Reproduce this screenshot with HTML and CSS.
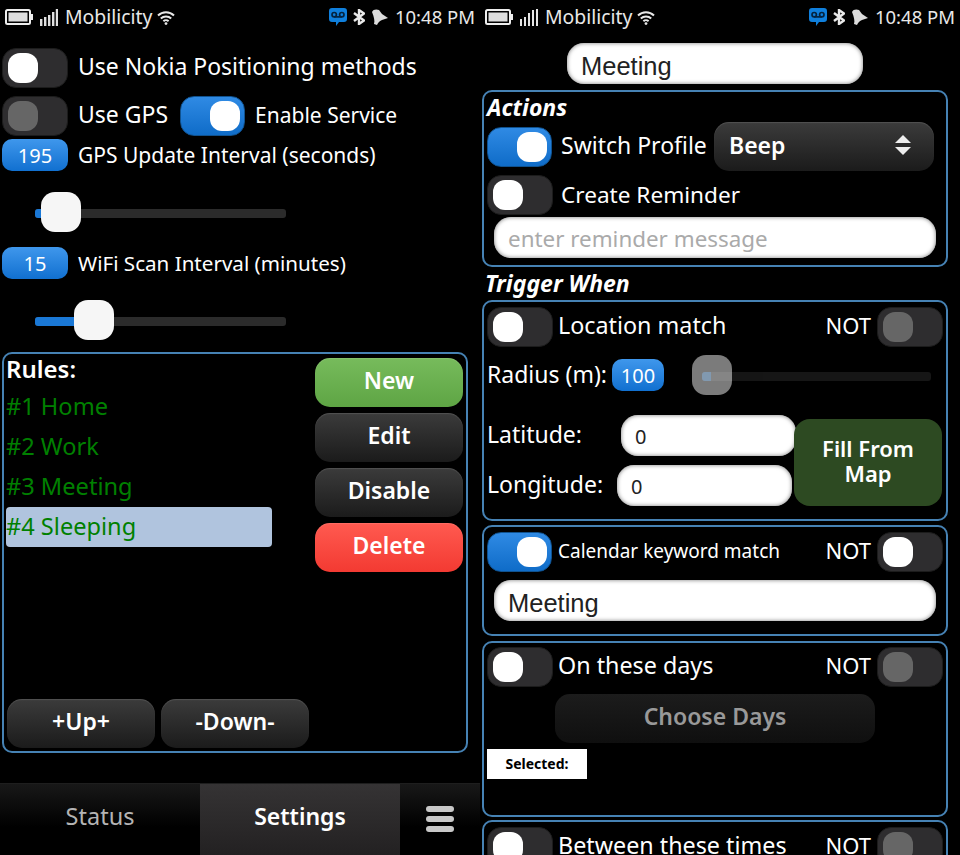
FILE: index.html
```html
<!DOCTYPE html>
<html lang="en">
<head>
    <meta charset="UTF-8">
    <title>Mobility rules</title>
    <link rel="stylesheet" href="styles.css">
</head>
<body>
    <div class="page">
        <!-- Settings screen -->
        <section class="screen">
            <div class="statusbar">
                <svg class="ico-battery" viewBox="0 0 28 16"><rect x="1" y="1" width="24" height="14" rx="1.5" fill="none" stroke="#eee" stroke-width="2"/><rect x="3.5" y="3.5" width="19" height="9" fill="#ddd"/><rect x="26" y="5" width="2" height="6" fill="#eee"/></svg>
                <svg class="ico-signal" viewBox="0 0 18 17"><g fill="#e0e0e0"><rect x="0" y="10" width="2.4" height="7"/><rect x="4" y="8" width="2.4" height="9"/><rect x="8" y="6" width="2.4" height="11"/><rect x="12" y="3" width="2.4" height="14"/><rect x="15.8" y="0" width="2.2" height="17"/></g></svg>
                <span class="carrier">Mobilicity</span>
                <svg class="ico-wifi" viewBox="0 0 18 15"><g fill="none" stroke="#e8e8e8" stroke-width="2"><path d="M1 5.500a11.500 11.500 0 0 1 16 0"/><path d="M3.800 8.500a7.500 7.500 0 0 1 10.400 0"/><path d="M6.400 11.300a3.700 3.700 0 0 1 5.200 0"/></g><circle cx="9" cy="13.600" r="1.400" fill="#e8e8e8"/></svg>
                <span class="status-right">
                    <svg class="ico-voicemail" viewBox="0 0 18 18"><path d="M3 0h12a3 3 0 0 1 3 3v8a3 3 0 0 1-3 3h-5l-3 4v-4H3a3 3 0 0 1-3-3V3a3 3 0 0 1 3-3z" fill="#0f7fdc"/><g fill="none" stroke="#04233f" stroke-width="1.700"><circle cx="5.200" cy="6.700" r="2.200"/><circle cx="12.800" cy="6.700" r="2.200"/><path d="M5.200 8.900h7.600"/></g></svg>
                    <svg class="ico-bt" viewBox="0 0 12 16"><path d="M1 4l10 7.500L6 15V1l5 3.500L1 12" fill="none" stroke="#e8e8e8" stroke-width="2.400"/></svg>
                    <svg class="ico-bell" viewBox="0 0 17 16"><path d="M1 3C2 0 6 0 8 1L11 5L17 9L11 11C8 12 7 14 6 16L3 15C4 12 3 8 1 3z" fill="#dcdcdc"/></svg>
                    <span class="clock">10:48 PM</span>
                </span>
            </div>

            <div class="settings">
                <div class="row">
                    <div class="toggle"><span class="knob"></span></div>
                    <span class="label">Use Nokia Positioning methods</span>
                </div>
                <div class="row row-gps">
                    <div class="toggle off-dim"><span class="knob"></span></div>
                    <span class="label">Use GPS</span>
                    <div class="toggle on"><span class="knob"></span></div>
                    <span class="label label-small">Enable Service</span>
                </div>
                <div class="row row-badge">
                    <span class="badge">195</span>
                    <span class="label label-mid">GPS Update Interval (seconds)</span>
                </div>
                <div class="slider">
                    <span class="track"><span class="fill" style="width: 8px"></span></span>
                    <span class="thumb" style="left: 6px"></span>
                </div>
                <div class="row row-badge row-badge-2">
                    <span class="badge">15</span>
                    <span class="label label-mid label-wifi">WiFi Scan Interval (minutes)</span>
                </div>
                <div class="slider slider-2">
                    <span class="track"><span class="fill" style="width: 42px"></span></span>
                    <span class="thumb" style="left: 39px"></span>
                </div>
            </div>

            <div class="box rules">
                <div class="rules-top">
                    <div class="rules-list">
                        <div class="rules-title">Rules:</div>
                        <div class="rule">#1 Home</div>
                        <div class="rule">#2 Work</div>
                        <div class="rule">#3 Meeting</div>
                        <div class="rule selected">#4 Sleeping</div>
                    </div>
                    <div class="rules-actions">
                        <button class="btn btn-green">New</button>
                        <button class="btn">Edit</button>
                        <button class="btn">Disable</button>
                        <button class="btn btn-red">Delete</button>
                    </div>
                </div>
                <div class="rules-move">
                    <button class="btn">+Up+</button>
                    <button class="btn">-Down-</button>
                </div>
            </div>

            <nav class="tabs">
                <div class="tab">Status</div>
                <div class="tab active">Settings</div>
                <div class="tab-menu"><span></span><span></span><span></span></div>
            </nav>
        </section>

        <!-- Rule editor screen -->
        <section class="screen">
            <div class="statusbar">
                <svg class="ico-battery" viewBox="0 0 28 16"><rect x="1" y="1" width="24" height="14" rx="1.5" fill="none" stroke="#eee" stroke-width="2"/><rect x="3.5" y="3.5" width="19" height="9" fill="#ddd"/><rect x="26" y="5" width="2" height="6" fill="#eee"/></svg>
                <svg class="ico-signal" viewBox="0 0 18 17"><g fill="#e4e4e4"><rect x="0" y="10" width="2" height="7"/><rect x="4" y="8" width="2" height="9"/><rect x="8" y="4" width="2" height="13"/><rect x="12" y="1" width="2" height="16"/><rect x="16" y="0" width="2" height="17"/></g></svg>
                <span class="carrier">Mobilicity</span>
                <svg class="ico-wifi" viewBox="0 0 18 15"><g fill="none" stroke="#e8e8e8" stroke-width="2"><path d="M1 5.500a11.500 11.500 0 0 1 16 0"/><path d="M3.800 8.500a7.500 7.500 0 0 1 10.400 0"/><path d="M6.400 11.300a3.700 3.700 0 0 1 5.200 0"/></g><circle cx="9" cy="13.600" r="1.400" fill="#e8e8e8"/></svg>
                <span class="status-right">
                    <svg class="ico-voicemail" viewBox="0 0 18 18"><path d="M3 0h12a3 3 0 0 1 3 3v8a3 3 0 0 1-3 3h-5l-3 4v-4H3a3 3 0 0 1-3-3V3a3 3 0 0 1 3-3z" fill="#0f7fdc"/><g fill="none" stroke="#04233f" stroke-width="1.700"><circle cx="5.200" cy="6.700" r="2.200"/><circle cx="12.800" cy="6.700" r="2.200"/><path d="M5.200 8.900h7.600"/></g></svg>
                    <svg class="ico-bt" viewBox="0 0 12 16"><path d="M1 4l10 7.500L6 15V1l5 3.500L1 12" fill="none" stroke="#e8e8e8" stroke-width="2.400"/></svg>
                    <svg class="ico-bell" viewBox="0 0 17 16"><path d="M1 3C2 0 6 0 8 1L11 5L17 9L11 11C8 12 7 14 6 16L3 15C4 12 3 8 1 3z" fill="#dcdcdc"/></svg>
                    <span class="clock">10:48 PM</span>
                </span>
            </div>

            <input class="field field-name" value="Meeting">

            <div class="box box-actions">
                <div class="heading heading-in">Actions</div>
                <div class="row row-profile">
                    <div class="toggle on"><span class="knob"></span></div>
                    <span class="label label-switch">Switch Profile</span>
                    <div class="select">
                        <span>Beep</span>
                        <svg class="select-arrows" viewBox="0 0 16 20"><path d="M8 0l8 8H0zM8 20l8-8H0z" fill="#eee"/></svg>
                    </div>
                </div>
                <div class="row row-reminder">
                    <div class="toggle"><span class="knob"></span></div>
                    <span class="label label-reminder">Create Reminder</span>
                </div>
                <input class="field field-wide field-pure" placeholder="enter reminder message">
            </div>

            <div class="heading heading-out">Trigger When</div>

            <div class="box box-location">
                <div class="row row-head">
                    <div class="toggle"><span class="knob"></span></div>
                    <span class="label label-head">Location match</span>
                    <span class="not">NOT</span>
                    <div class="toggle off-dim"><span class="knob"></span></div>
                </div>
                <div class="row row-radius">
                    <span class="label label-radius">Radius (m):</span>
                    <span class="badge badge-small">100</span>
                    <div class="slider slider-off">
                        <span class="track"><span class="fill" style="width: 9px"></span></span>
                        <span class="thumb" style="left: 0"></span>
                    </div>
                </div>
                <div class="coords">
                    <div class="coords-fields">
                        <div class="coord">
                            <span class="label label-radius">Latitude:</span>
                            <input class="field field-coord" value="0">
                        </div>
                        <div class="coord coord-long">
                            <span class="label label-radius">Longitude:</span>
                            <input class="field field-coord" value="0">
                        </div>
                    </div>
                    <button class="btn btn-map">Fill From Map</button>
                </div>
            </div>

            <div class="box box-calendar">
                <div class="row row-head">
                    <div class="toggle on"><span class="knob"></span></div>
                    <span class="label label-cal">Calendar keyword match</span>
                    <span class="not">NOT</span>
                    <div class="toggle"><span class="knob"></span></div>
                </div>
                <input class="field field-wide" value="Meeting">
            </div>

            <div class="box box-days">
                <div class="row row-head">
                    <div class="toggle"><span class="knob"></span></div>
                    <span class="label label-head">On these days</span>
                    <span class="not">NOT</span>
                    <div class="toggle off-dim"><span class="knob"></span></div>
                </div>
                <button class="btn btn-choose">Choose Days</button>
                <div class="selected-days">Selected:</div>
            </div>

            <div class="box box-times">
                <div class="row row-head">
                    <div class="toggle"><span class="knob"></span></div>
                    <span class="label label-head">Between these times</span>
                    <span class="not">NOT</span>
                    <div class="toggle off-dim"><span class="knob"></span></div>
                </div>
            </div>
        </section>
    </div>
</body>
</html>
```

FILE: styles.css
```css
* {
    box-sizing: border-box;
}

body {
    margin: 0;
    background: #000;
    color: #fff;
    font-family: "Noto Sans", "Open Sans", sans-serif;
}

.page {
    display: flex;
    width: 960px;
    height: 855px;
    overflow: hidden;
}

.screen {
    display: flex;
    flex-direction: column;
    width: 480px;
    height: 855px;
    overflow: hidden;
    flex: none;
}

/* status bar */
.statusbar {
    display: flex;
    align-items: center;
    height: 34px;
    flex: none;
    padding: 0 5px;
    color: #e8e8e8;
}

.ico-battery { width: 28px; height: 16px; flex: none; }
.ico-signal { width: 18px; height: 17px; margin-left: 7px; flex: none; }
.ico-wifi { width: 18px; height: 15px; margin-left: 5px; flex: none; }

.carrier {
    margin-left: 7px;
    font-size: 19.400px;
    line-height: 34px;
}

.status-right {
    display: flex;
    align-items: center;
    margin-left: auto;
}

.ico-voicemail { width: 18px; height: 18px; }
.ico-bt { width: 12px; height: 16px; margin-left: 6px; }
.ico-bell { width: 17px; height: 16px; margin-left: 6px; }

.clock {
    margin-left: 7px;
    font-size: 18.500px;
    line-height: 34px;
}

/* shared rows */
.row {
    display: flex;
    align-items: center;
}

.label {
    margin-left: 10px;
    padding-bottom: 4px;
    font-size: 23px;
    line-height: 30px;
    white-space: nowrap;
}

.label-small {
    padding-bottom: 2px;
    font-size: 21px;
}

.label-mid {
    padding-bottom: 1px;
    font-size: 21px;
}

.label-wifi {
    font-size: 20.600px;
}

.toggle {
    display: flex;
    align-items: center;
    width: 66px;
    height: 40px;
    flex: none;
    padding-left: 5px;
    background: #2e2d2f;
    border: 1px solid #1c1c1c;
    border-radius: 14px;
}

.knob {
    width: 30px;
    height: 30px;
    background: #fff;
    border-radius: 12px;
}

.toggle.off-dim .knob {
    background: #666;
}

.toggle.on {
    justify-content: flex-end;
    width: 65px;
    padding: 0 4px 0 0;
    background: linear-gradient(#2f8ae4, #0f6cc8);
    border-color: #10528f;
}

.badge {
    display: flex;
    align-items: center;
    justify-content: center;
    width: 66px;
    height: 32px;
    flex: none;
    font-size: 20px;
    background: linear-gradient(#3f97ec, #1170d0);
    border-radius: 10px;
}

.slider {
    position: relative;
    display: flex;
    align-items: center;
    width: 251px;
    height: 40px;
    margin-top: 21px;
    margin-left: 33px;
}

.track {
    display: block;
    width: 100%;
    height: 9px;
    margin-top: 3px;
    overflow: hidden;
    background: #2b2b2b;
    border-radius: 3px;
}

.fill {
    display: block;
    height: 100%;
    background: #1a78d6;
}

.thumb {
    position: absolute;
    top: 0;
    width: 40px;
    height: 40px;
    background: #f6f6f6;
    border-radius: 14px;
}

/* settings screen */
.settings {
    padding: 14px 2px 0;
}

.row-gps {
    margin-top: 8px;
}

.row-gps .toggle.on {
    margin-left: 12px;
}

.row-badge {
    margin-top: 3px;
}

.row-badge-2 {
    margin-top: 15px;
}

.box {
    flex: none;
    width: 466px;
    margin-left: 2px;
    background: #000;
    border: 2px solid #4682b4;
    border-radius: 10px;
}

.rules {
    display: flex;
    flex-direction: column;
    justify-content: space-between;
    height: 401px;
    margin-top: 12px;
    padding: 1px 3px 3px 2px;
}

.rules-top {
    display: flex;
    justify-content: space-between;
}

.rules-list {
    width: 266px;
}

.rules-title {
    height: 32px;
    font-size: 24px;
    font-weight: 600;
    line-height: 28px;
}

.rule {
    height: 40px;
    color: #008000;
    font-size: 23.600px;
    line-height: 38px;
    border-radius: 4px;
}

.rule.selected {
    background: #b0c4de;
}

.rules-actions {
    display: flex;
    flex-direction: column;
    gap: 6px;
    margin-top: 3px;
}

.btn {
    display: block;
    width: 148px;
    height: 49px;
    padding: 0 0 5px;
    color: #fff;
    font-family: inherit;
    font-size: 23px;
    font-weight: 600;
    background: linear-gradient(#3b3b3b, #1b1b1b);
    border: 0;
    border-radius: 15px;
    box-shadow: inset 0 1px 1px rgba(255, 255, 255, 0.12);
}

.btn-green {
    background: linear-gradient(#77bb5c, #5ea544);
}

.btn-red {
    background: linear-gradient(#ff5a50, #f33a32);
}

.rules-move {
    display: flex;
    gap: 6px;
    padding-left: 1px;
}

/* tab bar */
.tabs {
    display: flex;
    height: 72px;
    margin-top: auto;
    background: linear-gradient(#181818, #000 60%);
    border-top: 1px solid #1e1e1e;
}

.tab {
    width: 200px;
    color: #b4b4b4;
    font-size: 23.500px;
    line-height: 64px;
    text-align: center;
}

.tab.active {
    color: #fff;
    font-size: 23px;
    font-weight: 600;
    background: linear-gradient(#353334, #232122);
}

.tab-menu {
    display: flex;
    flex-direction: column;
    gap: 4px;
    padding: 22px 0 0 26px;
}

.tab-menu span {
    width: 28px;
    height: 6px;
    background: #c8c8c8;
    border-radius: 3px;
}

/* rule editor screen */
.field {
    display: block;
    height: 41px;
    padding: 5px 14px 0;
    color: #222;
    font-family: "Liberation Sans", sans-serif;
    font-size: 25.500px;
    background: #fff;
    border: 0;
    border-radius: 17px;
    box-shadow: inset 0 0 4px #777;
}

.field-name {
    width: 296px;
    flex: none;
    margin: 9px 0 0 87px;
}

.field-wide {
    width: 442px;
    margin-left: 10px;
}

.field-pure {
    padding-top: 2px;
    font-family: "Noto Sans", sans-serif;
    font-size: 22.400px;
}

.field-pure::placeholder {
    color: #aaa;
}

.heading {
    font-size: 23px;
    font-style: italic;
    font-weight: 700;
    line-height: 29px;
}

.heading-in {
    height: 29px;
    padding-left: 3px;
}

.heading-out {
    height: 33px;
    flex: none;
    padding-left: 5px;
    line-height: 32px;
}

.box-actions {
    height: 177px;
    margin-top: 6px;
    padding-top: 1px;
}

.row-profile {
    height: 49px;
    padding-left: 3px;
}

.label-switch {
    margin-left: 9px;
}

.label-reminder {
    margin-left: 8px;
    padding-bottom: 1px;
    font-size: 22.600px;
}

.select {
    display: flex;
    align-items: center;
    justify-content: space-between;
    width: 220px;
    height: 49px;
    margin-left: auto;
    margin-right: 12px;
    padding: 0 23px 3px 15px;
    font-size: 23px;
    font-weight: 600;
    background: linear-gradient(#3b3b3b, #1b1b1b);
    border-radius: 15px;
    box-shadow: inset 0 1px 1px rgba(255, 255, 255, 0.12);
}

.select-arrows {
    width: 16px;
    height: 20px;
}

.row-reminder {
    margin: 4px 0 2px;
    padding-left: 3px;
}

.box-location {
    height: 221px;
    padding-top: 1px;
}

.row-head {
    margin-top: 4px;
    padding: 0 3px;
}

.label-head {
    margin-left: 5px;
    font-size: 23.300px;
}

.label-cal {
    margin-left: 6px;
    padding-bottom: 2px;
    font-size: 19px;
}

.not {
    margin-left: auto;
    margin-right: 6px;
    padding-bottom: 4px;
    font-size: 22px;
}

.row-radius {
    margin-top: 8px;
    padding-left: 3px;
}

.label-radius {
    margin-left: 0;
}

.row-radius .label-radius {
    padding-bottom: 2px;
}

.badge-small {
    width: 52px;
    margin-left: 5px;
}

.slider-off {
    width: 239px;
    margin: 0 0 0 28px;
}

/* disabled slider: thumb stays see-through, so the fill shows under it */
.slider-off .track {
    width: calc(100% - 10px);
    margin-left: 10px;
    opacity: 0.5;
}

.slider-off .thumb {
    opacity: 0.5;
}

.coords {
    display: flex;
    margin-top: 20px;
    padding-left: 3px;
}

.coords-fields {
    display: flex;
    flex-direction: column;
    gap: 9px;
    width: 309px;
    flex: none;
}

.coord {
    display: flex;
    align-items: center;
    justify-content: space-between;
}

.coord-long {
    margin-right: 4px;
}

.field-coord {
    width: 175px;
    padding-top: 1px;
    font-family: "Noto Sans", sans-serif;
    font-size: 20px;
}

.btn-map {
    height: 87px;
    margin: 4px 0 0 -2px;
    padding: 0 24px 3px;
    font-size: 22px;
    line-height: 25px;
    background: #2d4a22;
    border-radius: 16px;
    box-shadow: none;
}

.box-calendar {
    height: 111px;
    margin-top: 4px;
    padding-top: 1px;
}

.box-calendar .field-wide {
    margin-top: 8px;
}

.box-days {
    height: 176px;
    margin-top: 5px;
}

.btn-choose {
    width: 320px;
    margin: 7px 0 0 71px;
    color: #999;
    background: linear-gradient(#1c1c1c, #0f0f0f);
    box-shadow: none;
}

.selected-days {
    width: 100px;
    height: 30px;
    margin: 6px 0 0 3px;
    color: #000;
    font-size: 14px;
    font-weight: 700;
    line-height: 30px;
    text-align: center;
    background: #fff;
}

.box-times {
    height: 60px;
    margin-top: 3px;
    padding-top: 1px;
}
```
